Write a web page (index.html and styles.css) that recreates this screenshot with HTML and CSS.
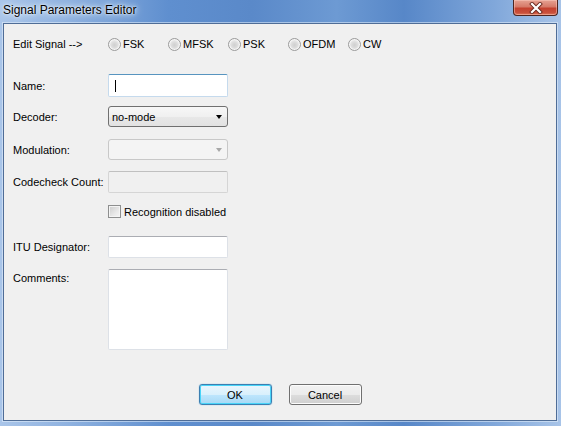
FILE: index.html
```html
<!DOCTYPE html>
<html>
<head>
<meta charset="utf-8">
<title>Signal Parameters Editor</title>
<link rel="stylesheet" href="styles.css">
</head>
<body>
<div class="window">
  <div class="titlebar">
    <span class="title">Signal Parameters Editor</span>
    <div class="close">
      <svg width="16" height="12" viewBox="0 0 16 12">
        <path d="M4 2 L12 10 M12 2 L4 10" stroke="#6b2a20" stroke-width="4" stroke-linecap="square"/>
        <path d="M4 2 L12 10 M12 2 L4 10" stroke="#ffffff" stroke-width="2.2" stroke-linecap="square"/>
      </svg>
    </div>
  </div>
  <div class="client">
    <div class="row signal-row">
      <span class="label">Edit Signal --&gt;</span>
      <div class="radios">
        <label class="radio-item"><span class="radio"></span><span>FSK</span></label>
        <label class="radio-item"><span class="radio"></span><span>MFSK</span></label>
        <label class="radio-item"><span class="radio"></span><span>PSK</span></label>
        <label class="radio-item"><span class="radio"></span><span>OFDM</span></label>
        <label class="radio-item"><span class="radio"></span><span>CW</span></label>
      </div>
    </div>

    <div class="row row-name">
      <span class="label">Name:</span>
      <div class="textbox focused"><span class="caret"></span></div>
    </div>

    <div class="row row-decoder">
      <span class="label">Decoder:</span>
      <div class="combo"><span>no-mode</span><span class="arrow"></span></div>
    </div>

    <div class="row row-modulation">
      <span class="label">Modulation:</span>
      <div class="combo disabled"><span></span><span class="arrow"></span></div>
    </div>

    <div class="row row-codecheck">
      <span class="label">Codecheck Count:</span>
      <div class="textbox disabled"></div>
    </div>

    <div class="row row-check">
      <span class="label"></span>
      <label class="check-item"><span class="checkbox"></span><span>Recognition disabled</span></label>
    </div>

    <div class="row row-itu">
      <span class="label">ITU Designator:</span>
      <div class="textbox"></div>
    </div>

    <div class="row row-comments">
      <span class="label">Comments:</span>
      <div class="textbox textarea"></div>
    </div>

    <div class="buttons">
      <div class="btn default">OK</div>
      <div class="btn">Cancel</div>
    </div>
  </div>
</div>
</body>
</html>
```
FILE: styles.css
```css
html, body {
  margin: 0;
  padding: 0;
}
body {
  font-family: "Liberation Sans", Arial, sans-serif;
  font-size: 11px;
  color: #000;
}
.window {
  width: 561px;
  height: 426px;
  box-sizing: border-box;
  display: flex;
  flex-direction: column;
  background: linear-gradient(90deg, #a9c5e9 0%, #8fb2e0 12%, #5f8fcf 30%, #5a89c9 45%, #6d9ad3 60%, #5787c8 72%, #80a7da 88%, #a8c4e8 100%);
}
.titlebar {
  height: 23px;
  display: flex;
  justify-content: space-between;
  align-items: flex-start;
  padding-left: 3px;
}
.title {
  font-size: 12px;
  line-height: 20px;
  color: #000;
  text-shadow: 0 0 5px #e6f0fb, 0 0 8px #e6f0fb, 0 0 2px #ffffff;
}
.close {
  width: 45px;
  height: 16px;
  margin-right: 3px;
  box-sizing: border-box;
  border: 1px solid #4e2520;
  border-top: none;
  border-radius: 0 0 4px 4px;
  background: linear-gradient(180deg, #e6a293 0%, #d67a69 45%, #c4412f 55%, #c9503c 85%, #e07a5c 100%);
  box-shadow: inset 0 0 0 1px rgba(255, 210, 200, 0.45);
  display: flex;
  align-items: center;
  justify-content: center;
}
.client {
  flex: 1;
  margin: 0 4px 5px 3px;
  border: 1px solid #4f6d97;
  background: #f0f0f0;
  box-shadow: 0 0 0 1px rgba(230, 240, 252, 0.55);
  padding: 13px 0 0 9px;
  display: flex;
  flex-direction: column;
}
.row {
  display: flex;
  align-items: center;
}
.label {
  width: 95px;
  flex: none;
  white-space: nowrap;
}
.signal-row {
  height: 14px;
}
.radios {
  display: flex;
}
.radio-item {
  width: 60px;
  display: flex;
  align-items: center;
}
.radio {
  width: 13px;
  height: 13px;
  box-sizing: border-box;
  border-radius: 50%;
  border: 1px solid #9b9b9b;
  background: radial-gradient(circle at 50% 55%, #cfcfcf 0%, #dcdcdc 35%, #f4f4f4 75%, #ffffff 100%);
  box-shadow: inset 0 0 0 1px #f6f6f6;
  margin-right: 2px;
  flex: none;
}
.row-name { margin-top: 23px; height: 23px; }
.row-decoder { margin-top: 9px; height: 21px; }
.row-modulation { margin-top: 12px; height: 21px; }
.row-codecheck { margin-top: 11px; height: 22px; }
.row-check { margin-top: 12px; height: 13px; }
.row-itu { margin-top: 18px; height: 22px; }
.row-comments { margin-top: 11px; height: 81px; align-items: flex-start; }
.row-comments .label { padding-top: 3px; }

.textbox {
  width: 120px;
  height: 100%;
  box-sizing: border-box;
  background: #fff;
  border: 1px solid #dde1e7;
  border-top-color: #abadb3;
  border-radius: 2px;
  position: relative;
}
.textbox.focused {
  border-color: #c5daed;
  border-top-color: #5794bf;
  display: flex;
  align-items: center;
  padding-left: 6px;
}
.caret {
  width: 1px;
  height: 12px;
  background: #000;
}
.textbox.disabled {
  background: #f0f0f0;
  border-color: #d5d5d5;
  border-top-color: #c0c0c0;
}
.combo {
  width: 120px;
  height: 100%;
  box-sizing: border-box;
  border: 1px solid #707070;
  border-radius: 3px;
  background: linear-gradient(180deg, #f7f7f7 0%, #f0f0f0 50%, #e8e8e8 51%, #e2e2e2 100%);
  display: flex;
  align-items: center;
  justify-content: space-between;
  padding: 0 5px 0 3px;
}
.arrow {
  width: 0;
  height: 0;
  border-left: 3.5px solid transparent;
  border-right: 3.5px solid transparent;
  border-top: 4px solid #000;
}
.combo.disabled {
  border-color: #c8c8c8;
  background: #f4f4f4;
}
.combo.disabled .arrow {
  border-top-color: #a8a8a8;
}
.check-item {
  display: flex;
  align-items: center;
}
.checkbox {
  width: 13px;
  height: 13px;
  box-sizing: border-box;
  border: 1px solid #8e8f8f;
  background: linear-gradient(135deg, #cbcbcb 0%, #e8e8e8 60%, #f6f6f6 100%);
  box-shadow: inset 0 0 0 1px #f4f4f4;
  margin-right: 3px;
  flex: none;
}
.buttons {
  margin-top: 34px;
  margin-left: -9px;
  display: flex;
  justify-content: center;
  gap: 17px;
}
.btn {
  width: 73px;
  height: 21px;
  box-sizing: border-box;
  border: 1px solid #707070;
  border-radius: 3px;
  background: linear-gradient(180deg, #f2f2f2 0%, #ebebeb 50%, #dddddd 51%, #cfcfcf 100%);
  box-shadow: inset 0 0 0 1px #fcfcfc;
  display: flex;
  align-items: center;
  justify-content: center;
}
.btn.default {
  border-color: #3c7fb1;
  background: linear-gradient(180deg, #eaf6fd 0%, #d9f0fc 50%, #bee6fd 51%, #a7d9f5 100%);
  box-shadow: inset 0 0 0 1px #48d4f8, 0 0 1px #48a0d8;
}
```
